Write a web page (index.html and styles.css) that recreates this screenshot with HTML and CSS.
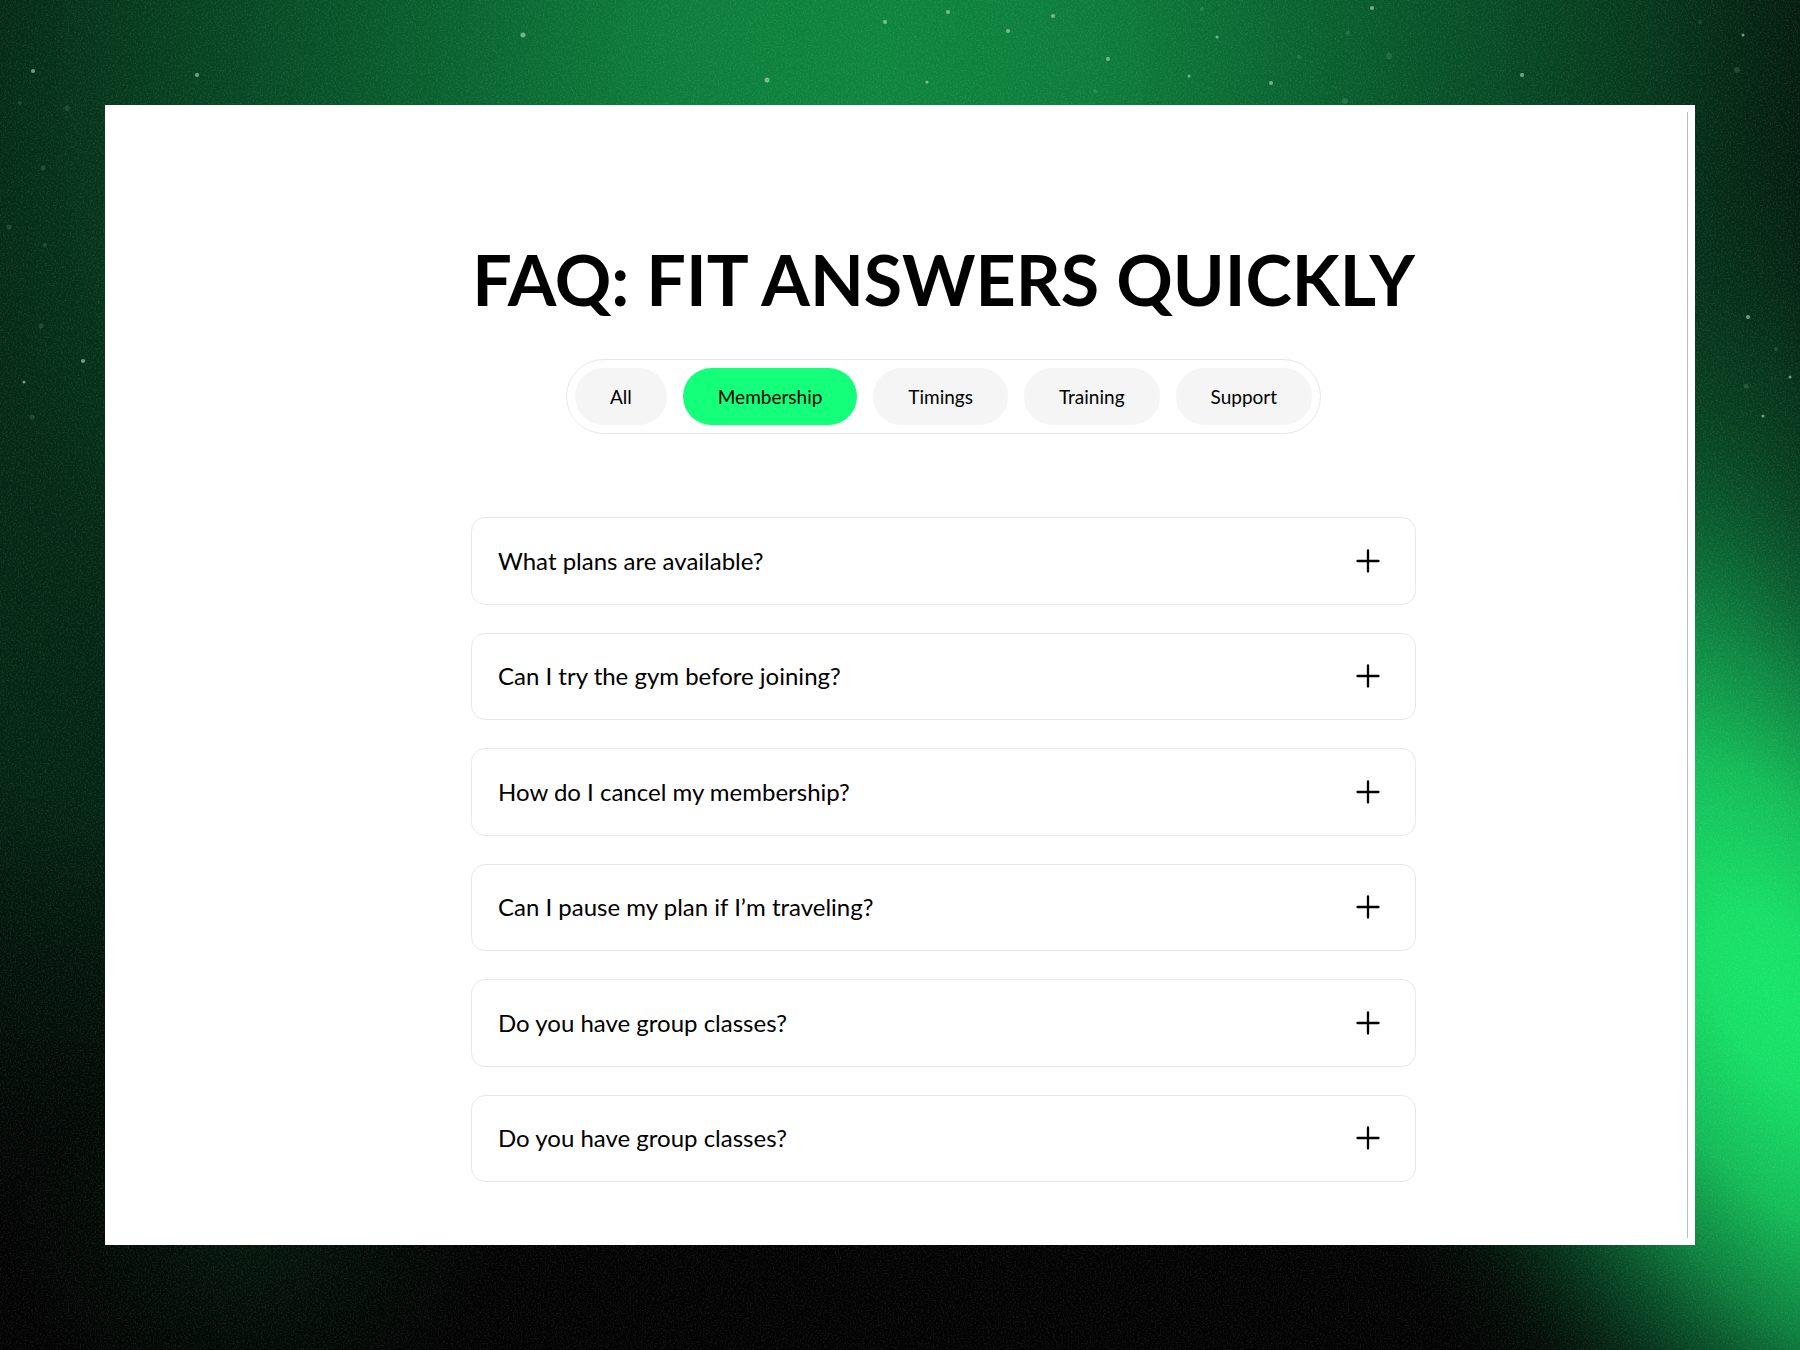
FILE: index.html
```
<!DOCTYPE html>
<html lang="en">
<head>
    <meta charset="utf-8">
    <title>FAQ: Fit Answers Quickly</title>
    <meta name="viewport" content="width=device-width, initial-scale=1">
    <link rel="stylesheet" href="styles.css">
</head>
<body>

<svg class="backdrop" viewBox="0 0 1800 1350" preserveAspectRatio="xMidYMid slice" aria-hidden="true">
  <defs>
    <radialGradient id="glowTop">
      <stop offset="0" stop-color="#0e863e"/>
      <stop offset="0.2" stop-color="#0d7d3b"/>
      <stop offset="0.45" stop-color="#085a2c"/>
      <stop offset="0.7" stop-color="#06381c"/>
      <stop offset="0.85" stop-color="#042614" stop-opacity="0.7"/>
      <stop offset="1" stop-color="#03180d" stop-opacity="0"/>
    </radialGradient>
    <radialGradient id="glowLeft">
      <stop offset="0" stop-color="#05381c"/>
      <stop offset="0.5" stop-color="#042a16" stop-opacity="0.85"/>
      <stop offset="0.75" stop-color="#031c0f" stop-opacity="0.5"/>
      <stop offset="1" stop-color="#03120a" stop-opacity="0"/>
    </radialGradient>
    <radialGradient id="glowSide">
      <stop offset="0" stop-color="#0b6432" stop-opacity="0.9"/>
      <stop offset="0.5" stop-color="#084a25" stop-opacity="0.6"/>
      <stop offset="1" stop-color="#05301a" stop-opacity="0"/>
    </radialGradient>
    <radialGradient id="glowRight">
      <stop offset="0" stop-color="#17e469"/>
      <stop offset="0.12" stop-color="#17de66"/>
      <stop offset="0.32" stop-color="#14bb57"/>
      <stop offset="0.5" stop-color="#0f8e45" stop-opacity="0.88"/>
      <stop offset="0.68" stop-color="#0a6634" stop-opacity="0.55"/>
      <stop offset="0.85" stop-color="#07441f" stop-opacity="0.2"/>
      <stop offset="1" stop-color="#05301a" stop-opacity="0"/>
    </radialGradient>
    <radialGradient id="glowBottom">
      <stop offset="0" stop-color="#04160c"/>
      <stop offset="1" stop-color="#04160c" stop-opacity="0"/>
    </radialGradient>
    <filter id="grain" x="0" y="0" width="100%" height="100%">
      <feTurbulence type="fractalNoise" baseFrequency="0.6" numOctaves="2" seed="4"/>
      <feColorMatrix values="0 0 0 0 1  0 0 0 0 1  0 0 0 0 1  1.6 0 0 0 -0.7"/>
    </filter>
  </defs>
  <rect width="1800" height="1350" fill="#020202"/>
  <ellipse cx="100" cy="360" rx="620" ry="900" fill="url(#glowLeft)"/>
  <ellipse cx="880" cy="60" rx="1100" ry="1060" fill="url(#glowTop)"/>
  <ellipse cx="250" cy="1240" rx="240" ry="180" fill="url(#glowBottom)"/>
  <ellipse cx="1700" cy="600" rx="360" ry="480" fill="url(#glowSide)"/>
  <ellipse cx="1780" cy="1000" rx="840" ry="460" transform="rotate(58 1780 1000)" fill="url(#glowRight)"/>
  <rect width="1800" height="1350" filter="url(#grain)" opacity="0.14"/>
  <g fill="#b4e6c4" opacity="0.6">
    <circle cx="523" cy="35" r="2.5"/>
    <circle cx="767" cy="80" r="2.5"/>
    <circle cx="885" cy="22" r="2"/>
    <circle cx="948" cy="12" r="2"/>
    <circle cx="1008" cy="31" r="2"/>
    <circle cx="1053" cy="16" r="2"/>
    <circle cx="1108" cy="59" r="2"/>
    <circle cx="927" cy="82" r="1.5"/>
    <circle cx="1189" cy="76" r="1.5"/>
    <circle cx="1217" cy="37" r="1.5"/>
    <circle cx="1271" cy="83" r="2"/>
    <circle cx="1372" cy="8" r="2"/>
    <circle cx="1522" cy="75" r="2"/>
    <circle cx="1743" cy="35" r="1.5"/>
    <circle cx="33" cy="71" r="2"/>
    <circle cx="197" cy="75" r="2"/>
    <circle cx="83" cy="361" r="2"/>
    <circle cx="24" cy="382" r="1.5"/>
    <circle cx="1748" cy="317" r="2"/>
    <circle cx="1790" cy="377" r="1.5"/>
    <circle cx="1763" cy="416" r="1.5"/>
  </g>
  <g fill="#9bd8ae" opacity="0.16">
    <circle cx="20" cy="103" r="2"/>
    <circle cx="67" cy="108" r="2.5"/>
    <circle cx="43" cy="168" r="2.5"/>
    <circle cx="9" cy="227" r="2.5"/>
    <circle cx="45" cy="245" r="2"/>
    <circle cx="41" cy="326" r="2.5"/>
    <circle cx="32" cy="417" r="2.5"/>
    <circle cx="1095" cy="91" r="2"/>
    <circle cx="1202" cy="9" r="2"/>
    <circle cx="1299" cy="57" r="2"/>
    <circle cx="1348" cy="33" r="2"/>
    <circle cx="1345" cy="101" r="3"/>
    <circle cx="1389" cy="56" r="3"/>
    <circle cx="1700" cy="22" r="2"/>
    <circle cx="1737" cy="70" r="3"/>
    <circle cx="1776" cy="349" r="2"/>
    <circle cx="1746" cy="386" r="2.5"/>
  </g>
</svg>

<svg class="sprite" aria-hidden="true">
  <symbol id="plus" viewBox="0 0 24 24">
    <path d="M12 1.5V22.5M1.5 12H22.5" fill="none" stroke="#000" stroke-width="2.3" stroke-linecap="round"/>
  </symbol>
</svg>

<main class="panel">
  <section class="faq">
    <h1 class="title">FAQ: FIT ANSWERS QUICKLY</h1>

    <nav class="filters" aria-label="FAQ categories">
      <button type="button" class="filter">All</button>
      <button type="button" class="filter active" aria-pressed="true">Membership</button>
      <button type="button" class="filter">Timings</button>
      <button type="button" class="filter">Training</button>
      <button type="button" class="filter">Support</button>
    </nav>

    <div class="questions">
      <button type="button" class="question"><span>What plans are available?</span><svg class="plus"><use href="#plus"/></svg></button>
      <button type="button" class="question"><span>Can I try the gym before joining?</span><svg class="plus"><use href="#plus"/></svg></button>
      <button type="button" class="question"><span>How do I cancel my membership?</span><svg class="plus"><use href="#plus"/></svg></button>
      <button type="button" class="question"><span>Can I pause my plan if I’m traveling?</span><svg class="plus"><use href="#plus"/></svg></button>
      <button type="button" class="question"><span>Do you have group classes?</span><svg class="plus"><use href="#plus"/></svg></button>
      <button type="button" class="question"><span>Do you have group classes?</span><svg class="plus"><use href="#plus"/></svg></button>
    </div>
  </section>
  <div class="rail"></div>
</main>

</body>
</html>
```

FILE: styles.css
```
* {
	box-sizing: border-box;
}

body {
	margin: 0;
	min-height: 100vh;
	padding: 105px;
	display: flex;
	background: #020202;
	color: #000;
	font-family: Lato, "Open Sans", sans-serif;
}

.backdrop {
	position: fixed;
	inset: 0;
	width: 100%;
	height: 100%;
	z-index: -1;
}

.sprite {
	position: absolute;
	width: 0;
	height: 0;
}

.panel {
	flex: 1;
	display: flex;
	padding: 7px;
	background: #fff;
}

.faq {
	flex: 1;
	display: flex;
	flex-direction: column;
	align-items: center;
	padding: 128px 0 56px 88px;
}

.title {
	margin: 0;
	font-size: 70px;
	line-height: 78px;
	font-weight: 700;
	white-space: nowrap;
}

.filters {
	display: flex;
	gap: 16px;
	margin-top: 41px;
	padding: 8px;
	border: 1px solid #e8e8e8;
	border-radius: 38px;
}

.filter {
	height: 57px;
	padding: 0 35px;
	border: 0;
	border-radius: 29px;
	background: #f5f5f5;
	color: #000;
	font-family: inherit;
	font-size: 19px;
	cursor: pointer;
}

.filter.active {
	background: #14ff7a;
}

.questions {
	flex: 1;
	display: grid;
	grid-auto-rows: 1fr;
	gap: 28px;
	width: 100%;
	max-width: 945px;
	margin-top: 83px;
}

.question {
	display: flex;
	align-items: center;
	justify-content: space-between;
	padding: 0 35px 0 26px;
	border: 1px solid #e8e8e8;
	border-radius: 14px;
	background: #fff;
	color: #000;
	font-family: inherit;
	font-size: 24px;
	line-height: 28px;
	text-align: left;
	cursor: pointer;
}

.plus {
	width: 24px;
	height: 24px;
}

.rail {
	width: 1px;
	background: #bdbdbd;
}
```
